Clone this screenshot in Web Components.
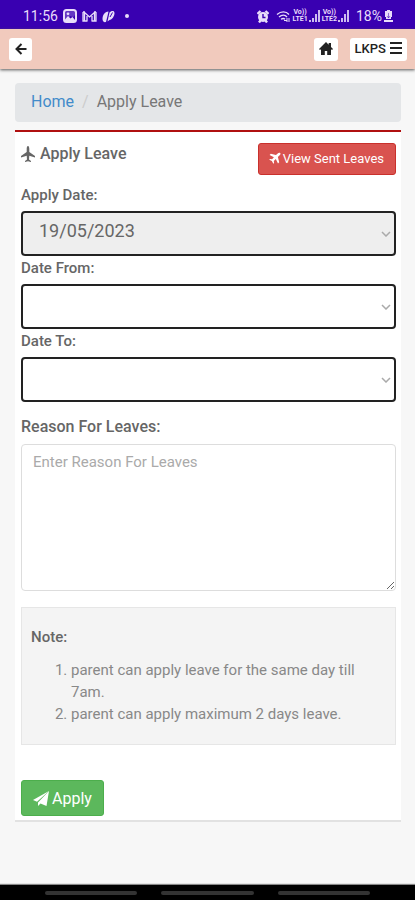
<!DOCTYPE html>
<html lang="en">
<head>
<meta charset="utf-8">
<meta name="viewport" content="width=device-width, initial-scale=1">
<title>Apply Leave</title>
<style>
body { margin: 0; font-family: Roboto, "Liberation Sans", sans-serif; color: #666; background: #f7f7f7; }
</style>
</head>
<body>
<leave-page></leave-page>
<script>
const define = (name, html) => customElements.define(name, class extends HTMLElement {
  constructor() {
    super();
    this.attachShadow({ mode: 'open' }).innerHTML = '<style>*{box-sizing:border-box}</style>' + html;
  }
});

const icons = {
  image: ['0 0 14 14', '<rect x="1" y="1" width="12" height="12" rx="2.5" fill="none" stroke="currentColor" stroke-width="2"/><path d="M2 2h10v4L10 8.500 7.500 7 5 9.500 2 11z" opacity=".25"/><path d="M2 12v-1.500L5 7l2.500 2.500L9.500 8l2.500 3v1z"/><circle cx="5" cy="4.800" r="1.400"/>'],
  mail: ['0 0 15 13', '<path d="M2.500 11V2.500L7.500 7l5-4.500V11M5 11V6M10 11V6M1 2v9h4.500M14 2v9H9.500M1 2h2m9 0h2" fill="none" stroke="currentColor" stroke-width="1.300"/>'],
  leaf: ['0 0 13 13', '<path d="M.5 9C.5 5 2.500 2 6.500 1.500L5.500 6 4 12C2 12.500.5 11.500.5 9zM5.500 11.500 7.500 2.500C9 .5 12.500 0 12.500 3c0 3.500-2.500 6.500-5 7z"/><path d="m8 7 2.500-4.500" stroke="#3900b1" fill="none"/>'],
  alarm: ['0 0 12 13', '<path d="M.5 4 3.500 1M11.500 4 8.500 1M2 12.500l1.500-2m6.500 2-1.500-2" stroke="currentColor" stroke-width="2.400"/><circle cx="6" cy="7" r="5"/><path d="M6 4v3.500h2.500" fill="none" stroke="#3900b1" stroke-width="1.400"/>'],
  wifi: ['0 0 15 13', '<path d="M1 4.500c4-3.500 9-3.500 12 0M3 7c3-2.500 6-2.500 8 0M5 9.300c1.500-1 3-1 4 0" fill="none" stroke="currentColor" stroke-width="1.300"/><path d="M8 10.500h3M11 8v4m2-4v4" stroke="currentColor"/>'],
  bars: ['0 0 12 12', '<g opacity=".85"><path d="M0 10h2v2H0zM3 8h2v4H3zM6 4h2v8H6zM9 0h2v12H9z"/></g>'],
  battery: ['0 0 9 13', '<path d="M3 0h3v1h2v6H7v2H2V7H1V1h2zM0 10h9v2H0z"/><path d="M4.500 3v5M3 6l1.500 2L6 6" stroke="#3900b1" fill="none" opacity=".5"/>'],
  back: ['0 0 12 12', '<path d="M11.500 6H2M6.500 1 1.500 6l5 5" fill="none" stroke="currentColor" stroke-width="2"/>'],
  home: ['0 0 14 14', '<path d="M7 0 0 7l1 1 1-.8V13h3.800V9h2.400v4H12V7.200l1 .8 1-1-2-2V1H9.700v1.700z"/>'],
  menu: ['0 0 12 12', '<path d="M0 0h12v2H0zM0 5h12v2H0zM0 10h12v2H0z"/>'],
  plane: ['0 0 14 16', '<path d="M7 0C6 0 5.700 1.500 5.700 3v3L0 10v1.600l5.700-1.800.3 3.700-2 1.500v1l3-.8 3 .8v-1l-2-1.500.3-3.700L14 11.600V10L8.300 6V3C8.300 1.500 8 0 7 0z"/>'],
  jet: ['0 0 12 12', '<path d="M11.200 1c-.7-.7-1.900-.2-2.800.7L7 3.100 1.800 1.800.6 3 4.900 5.200 3.100 7.200 1 6.900.2 7.700l2.700 1.400 1.400 2.700.8-.8L4.800 8.900l2-1.800 2.200 4.300 1.200-1.200L8.900 5l1.500-1.400c.9-.9 1.500-1.900.8-2.600z"/>'],
  send: ['0 0 16 15', '<path d="M16 0 0 9l4 1.700z"/><path d="M16 0 5 11.500V15l2.500-2.600L13.500 15z"/>']
};
customElements.define('ui-icon', class extends HTMLElement {
  constructor() {
    super();
    this.attachShadow({ mode: 'open' });
  }
  connectedCallback() {
    const [box, art] = icons[this.getAttribute('name')];
    const [, , w, h] = box.split(' ');
    this.shadowRoot.innerHTML = `<style>:host{display:inline-flex;flex:none}svg{display:block;fill:currentColor}</style><svg width="${w}" height="${h}" viewBox="${box}" aria-hidden="true">${art}</svg>`;
  }
});

define('network-label', `
<style>:host{display:flex;flex-direction:column;align-items:center;font-size:7px;line-height:7px;font-weight:700}</style>
<span>Vo))</span><span><slot></slot></span>`);

define('status-bar', `
<style>
:host{display:flex;align-items:center;justify-content:space-between;height:29px;padding:3px 22px 0 23px;background:#3900b1;color:#e8dcfa;font-size:14px}
div{display:flex;align-items:center}
.left{gap:5px}.right{gap:1px}
.dot{width:4px;height:4px;border-radius:50%;background:currentColor;margin-left:5px}
.alarm{margin-right:6px}.pct{margin:0 1px 0 5px}
</style>
<div class="left"><span>11:56</span><ui-icon name="image"></ui-icon><ui-icon name="mail"></ui-icon><ui-icon name="leaf"></ui-icon><span class="dot"></span></div>
<div class="right"><ui-icon class="alarm" name="alarm"></ui-icon><ui-icon name="wifi"></ui-icon><network-label>LTE1</network-label><ui-icon name="bars"></ui-icon><network-label>LTE2</network-label><ui-icon name="bars"></ui-icon><span class="pct">18%</span><ui-icon name="battery"></ui-icon></div>`);

define('app-header', `
<style>
:host{display:flex;align-items:center;gap:12px;height:40px;padding:0 8px 0 9px;background:#f1cabd;box-shadow:0 1px 3px #555;position:relative}
button{display:flex;align-items:center;justify-content:center;gap:4px;height:23px;min-width:23px;padding:0 5px;border:0;border-radius:3px;background:#fff;color:#222;font:500 13px Roboto,sans-serif}
.back{margin-right:auto}
.menu{padding:0 5px 2px}
</style>
<button class="back" aria-label="Back"><ui-icon name="back"></ui-icon></button>
<button aria-label="Home"><ui-icon name="home"></ui-icon></button>
<button class="menu">LKPS <ui-icon name="menu"></ui-icon></button>`);

define('bread-crumb', `
<style>
:host{display:block;background:#e4e6e8;border-radius:4px;padding:0 16px}
ol{display:flex;margin:0;padding:0;list-style:none;font-size:16px;line-height:38px;padding-bottom:1px;color:#777}
li+li::before{content:"/";color:#ccc;padding:0 8px}
a{color:#428bca;text-decoration:none}
</style>
<nav aria-label="Breadcrumb"><ol><li><a href="#">Home</a></li><li aria-current="page">Apply Leave</li></ol></nav>`);

customElements.define('date-field', class extends HTMLElement {
  constructor() {
    super();
    const label = this.getAttribute('label');
    const value = this.getAttribute('value') || '';
    this.attachShadow({ mode: 'open' }).innerHTML = `
<style>
:host{display:block}
label{display:block;font-weight:500;font-size:15px;line-height:22px;padding-bottom:5px}
.box{display:grid;align-items:center}
select,svg{grid-area:1/1}
select{appearance:none;box-sizing:border-box;width:100%;height:45px;padding:0 30px 6px 16px;border:2px solid #222;border-radius:4px;background:#fff;color:#666;font:18px Roboto,sans-serif;opacity:1}
select:disabled{background:#eee}
svg{justify-self:end;margin-right:5px;pointer-events:none}
</style>
<label for="d">${label}</label>
<div class="box"><select id="d" ${value ? 'disabled' : ''}><option>${value}</option></select>
<svg width="10" height="6" viewBox="0 0 10 6" aria-hidden="true"><path d="m1 1 4 4 4-4" fill="none" stroke="#aaa" stroke-width="1.500"/></svg></div>`;
  }
});

define('reason-field', `
<style>
:host{display:block}
label{display:block;font-weight:500;font-size:16px;line-height:22px;padding-bottom:6px}
textarea{display:block;width:100%;height:147px;padding:6px 12px 6px 11px;border:1px solid #ddd;border-radius:4px;background:#fff;color:#666;font:15px/22px Roboto,sans-serif;resize:vertical}
textarea::placeholder{color:#aaa}
</style>
<label for="r">Reason For Leaves:</label><textarea id="r" placeholder="Enter Reason For Leaves"></textarea>`);

define('note-box', `
<style>
:host{display:block;padding:18px 9px 19px;background:#f4f4f4;border:1px solid #e6e6e6;font-size:15px;line-height:22px;color:#888}
strong{display:block;font-weight:500;color:#666;margin-bottom:11px}
</style>
<strong>Note:</strong><slot></slot>`);

define('leave-card', `
<style>
:host{display:block;background:#fff;border-top:2px solid #b01010;border-bottom:2px solid #e2e2e2;padding:11px 5px 4px 6px}
header{display:flex;justify-content:space-between;align-items:flex-start;margin-bottom:9px}
h1{display:flex;align-items:center;gap:5px;margin:0;font-size:16px;line-height:22px;font-weight:500}
button{display:flex;align-items:center;font-family:Roboto,sans-serif;color:#fff;border-radius:3px}
.sent{gap:2px;height:32px;padding:0 11px 2px 10px;border:1px solid #c9302c;background:#d9534f;font-size:13px}
.apply{gap:3px;height:36px;padding:0 11px;border:1px solid #4cae4c;background:#5cb85c;font-size:16px;margin-top:35px}
date-field+date-field{margin-top:1px}
reason-field{margin-top:14px}
note-box{margin-top:16px}
ol{margin:0;padding-left:40px}
</style>
<header><h1><ui-icon name="plane"></ui-icon>Apply Leave</h1><button class="sent"><ui-icon name="jet"></ui-icon>View Sent Leaves</button></header>
<date-field label="Apply Date:" value="19/05/2023"></date-field>
<date-field label="Date From:"></date-field>
<date-field label="Date To:"></date-field>
<reason-field></reason-field>
<note-box><ol><li>parent can apply leave for the same day till 7am.</li><li>parent can apply maximum 2 days leave.</li></ol></note-box>
<button class="apply"><ui-icon name="send"></ui-icon>Apply</button>`);

define('nav-strip', `
<style>
:host{display:flex;justify-content:center;align-items:center;gap:24px;height:15px;padding:0 45px;background:#000;box-shadow:0 -1px 1px #888}
i{flex:1;height:4px;border-radius:2px;background:#333}
</style><i></i><i></i><i></i>`);

define('leave-page', `
<style>
:host{display:flex;flex-direction:column;min-height:100vh}
main{flex:1;padding:14px 14px 20px 15px}
bread-crumb{margin-bottom:8px}
</style>
<status-bar></status-bar><app-header></app-header>
<main><bread-crumb></bread-crumb><leave-card></leave-card></main>
<nav-strip></nav-strip>`);
</script>
</body>
</html>
